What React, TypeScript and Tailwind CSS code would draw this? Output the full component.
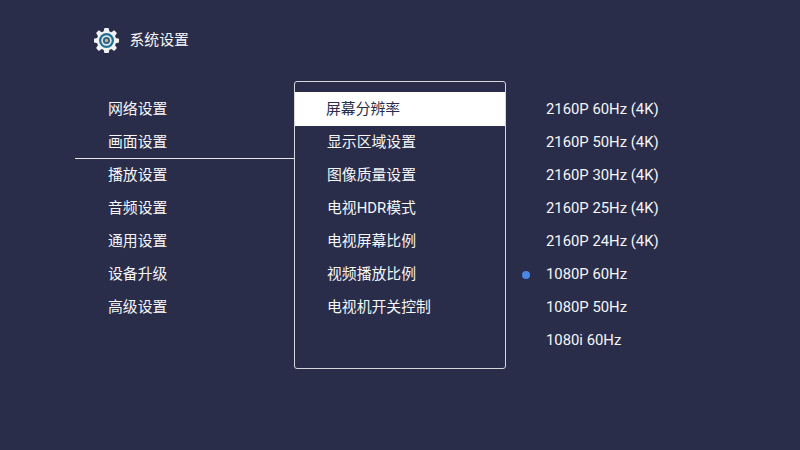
const font = "font-['Roboto','Noto_Sans_CJK_SC',sans-serif]";

const categories = ["网络设置", "画面设置", "播放设置", "音频设置", "通用设置", "设备升级", "高级设置"];
const options = ["屏幕分辨率", "显示区域设置", "图像质量设置", "电视HDR模式", "电视屏幕比例", "视频播放比例", "电视机开关控制"];
const resolutions = [
  "2160P 60Hz (4K)",
  "2160P 50Hz (4K)",
  "2160P 30Hz (4K)",
  "2160P 25Hz (4K)",
  "2160P 24Hz (4K)",
  "1080P 60Hz",
  "1080P 50Hz",
  "1080i 60Hz",
];

function GearIcon() {
  return (
    <svg width="25" height="25" viewBox="0 0 24 24" className="-ml-[0.5px]">
      <path
        fill="#f1f1f1"
        d="M10 0h4l.7 3.2 1.9.8 2.8-1.8 2.6 2.7-1.8 2.7.8 2 3 .6v3.8l-3 .6-.8 2 1.8 2.7-2.6 2.7-2.8-1.8-1.9.8-.7 3.2h-4l-.7-3.2-1.9-.8-2.8 1.8-2.6-2.7 1.8-2.7-.8-2-3-.6v-3.8l3-.6.8-2-1.8-2.7 2.6-2.7 2.8 1.8 1.9-.8z"
      />
      <circle cx="12" cy="12" r="7.2" fill="#1d6f93" />
      <circle cx="12" cy="12" r="5" fill="#e4e8ea" />
      <circle cx="12" cy="12" r="3.4" fill="#2a5f86" />
      <circle cx="12" cy="12" r="1.6" fill="#c9b48a" />
    </svg>
  );
}

export default function App() {
  return (
    <div className={`flex h-[450px] w-[800px] flex-col overflow-hidden bg-[#292d4a] text-[#f6f6f6] ${font}`}>
      <div className="flex h-[81px] items-center gap-[11px] pl-[94px]">
        <GearIcon />
        <span className="text-[14.85px]">系统设置</span>
      </div>

      <div className="flex pl-[75px]">
        <ul className="w-[219px] pt-[12px]">
          {categories.map((name, i) => (
            <li
              key={name}
              className={`flex h-[33px] items-center pl-[33px] text-[14.85px] ${i === 1 ? "border-b border-[#e6e6e6]" : ""}`}
            >
              {name}
            </li>
          ))}
        </ul>

        <ul className="h-[288px] w-[212px] rounded-[3px] border border-[#d5d6dc] pt-[10px]">
          {options.map((name, i) => (
            <li
              key={name}
              className={`flex items-center text-[14.85px] ${i === 0 ? "h-[34px] bg-white pl-[31px] text-[#292d4a]" : "h-[33px] pl-[32px]"}`}
            >
              {name}
            </li>
          ))}
        </ul>

        <ul className="pl-[16px] pt-[12px]">
          {resolutions.map((name) => (
            <li key={name} className="flex h-[33px] items-center text-[14.85px]">
              <span className={`mr-[16px] size-[8px] rounded-full ${name === "1080P 60Hz" ? "bg-[#4a86e8]" : ""}`} />
              {name}
            </li>
          ))}
        </ul>
      </div>
    </div>
  );
}
